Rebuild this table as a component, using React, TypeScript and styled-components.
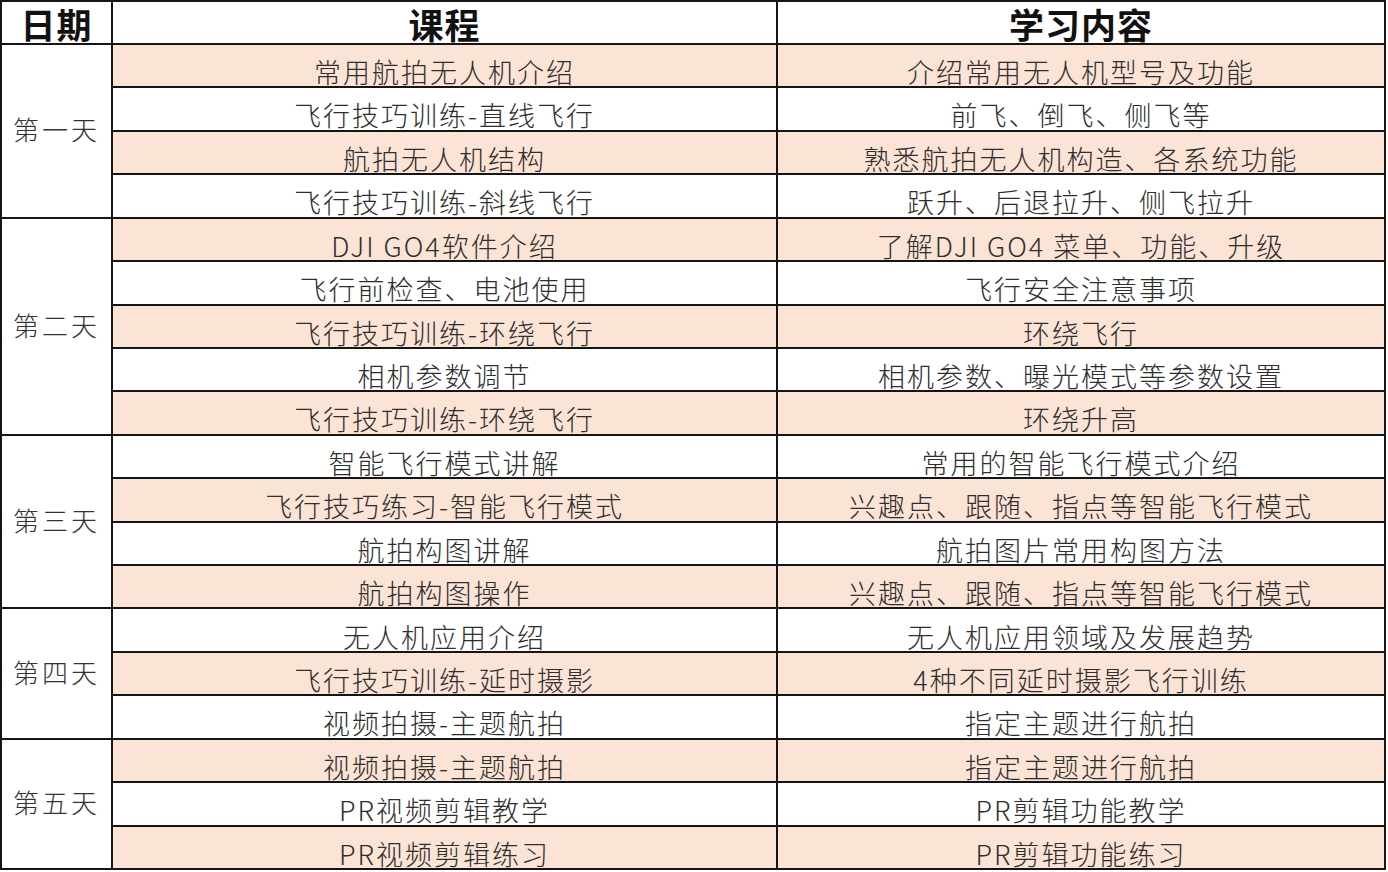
import React from "react";
import { createGlobalStyle, styled } from "styled-components";

type Lesson = { course: string; content: string };
type Day = { name: string; lessons: Lesson[] };

const days: Day[] = [
  {
    name: "第一天",
    lessons: [
      { course: "常用航拍无人机介绍", content: "介绍常用无人机型号及功能" },
      { course: "飞行技巧训练-直线飞行", content: "前飞、倒飞、侧飞等" },
      { course: "航拍无人机结构", content: "熟悉航拍无人机构造、各系统功能" },
      { course: "飞行技巧训练-斜线飞行", content: "跃升、后退拉升、侧飞拉升" },
    ],
  },
  {
    name: "第二天",
    lessons: [
      { course: "DJI GO4软件介绍", content: "了解DJI GO4 菜单、功能、升级" },
      { course: "飞行前检查、电池使用", content: "飞行安全注意事项" },
      { course: "飞行技巧训练-环绕飞行", content: "环绕飞行" },
      { course: "相机参数调节", content: "相机参数、曝光模式等参数设置" },
      { course: "飞行技巧训练-环绕飞行", content: "环绕升高" },
    ],
  },
  {
    name: "第三天",
    lessons: [
      { course: "智能飞行模式讲解", content: "常用的智能飞行模式介绍" },
      { course: "飞行技巧练习-智能飞行模式", content: "兴趣点、跟随、指点等智能飞行模式" },
      { course: "航拍构图讲解", content: "航拍图片常用构图方法" },
      { course: "航拍构图操作", content: "兴趣点、跟随、指点等智能飞行模式" },
    ],
  },
  {
    name: "第四天",
    lessons: [
      { course: "无人机应用介绍", content: "无人机应用领域及发展趋势" },
      { course: "飞行技巧训练-延时摄影", content: "4种不同延时摄影飞行训练" },
      { course: "视频拍摄-主题航拍", content: "指定主题进行航拍" },
    ],
  },
  {
    name: "第五天",
    lessons: [
      { course: "视频拍摄-主题航拍", content: "指定主题进行航拍" },
      { course: "PR视频剪辑教学", content: "PR剪辑功能教学" },
      { course: "PR视频剪辑练习", content: "PR剪辑功能练习" },
    ],
  },
];

const GlobalStyle = createGlobalStyle`
  html, body {
    margin: 0;
    padding: 0;
    background: #ffffff;
  }
  body {
    font-family: "Noto Sans CJK SC", "Noto Sans", sans-serif;
  }
`;

// grid gaps draw the table lines
const Table = styled.div`
  display: grid;
  grid-template-columns: 109px 663px 606px;
  grid-template-rows: 41px repeat(19, 1fr);
  gap: 2px;
  padding: 2px;
  width: 1386px;
  height: 870px;
  box-sizing: border-box;
  background: #151515;
`;

const HeadCell = styled.div`
  background: #ffffff;
  display: flex;
  align-items: flex-end;
  justify-content: center;
  font-size: 35px;
  font-weight: 700;
  line-height: 1.05;
  letter-spacing: 1px;
  color: #111111;
`;

const DayCell = styled.div<{ $start: number; $span: number }>`
  grid-column: 1;
  grid-row: ${(p) => p.$start} / span ${(p) => p.$span};
  background: #ffffff;
  display: flex;
  align-items: center;
  justify-content: center;
  font-size: 26px;
  font-weight: 300;
  letter-spacing: 3px;
  color: #333333;
  padding-bottom: 4px;
`;

const Cell = styled.div<{ $col: number; $row: number; $pink: boolean }>`
  grid-column: ${(p) => p.$col};
  grid-row: ${(p) => p.$row};
  background: ${(p) => (p.$pink ? "#fbe3d6" : "#ffffff")};
  display: flex;
  align-items: flex-end;
  justify-content: center;
  font-size: 27px;
  font-weight: 300;
  line-height: 1.05;
  letter-spacing: 2px;
  color: #2e2e2e;
  white-space: nowrap;
`;

const App: React.FC = () => {
  let index = 0;
  return (
    <>
      <GlobalStyle />
      <Table>
        <HeadCell>日期</HeadCell>
        <HeadCell>课程</HeadCell>
        <HeadCell>学习内容</HeadCell>
        {days.map((day) => {
          const start = index + 2;
          return (
            <React.Fragment key={day.name}>
              <DayCell $start={start} $span={day.lessons.length}>
                {day.name}
              </DayCell>
              {day.lessons.map((lesson) => {
                const i = index++;
                const pink = i % 2 === 0;
                return (
                  <React.Fragment key={i}>
                    <Cell $col={2} $row={i + 2} $pink={pink}>
                      {lesson.course}
                    </Cell>
                    <Cell $col={3} $row={i + 2} $pink={pink}>
                      {lesson.content}
                    </Cell>
                  </React.Fragment>
                );
              })}
            </React.Fragment>
          );
        })}
      </Table>
    </>
  );
};

export default App;
